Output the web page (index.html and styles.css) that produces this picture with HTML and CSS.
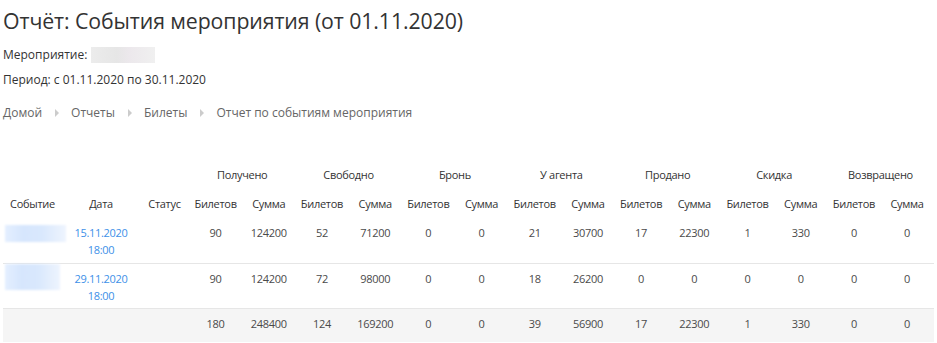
FILE: index.html
```html
<!DOCTYPE html>
<html lang="ru">
<head>
<meta charset="utf-8">
<title>Отчёт: События мероприятия</title>
<link rel="stylesheet" href="styles.css">
</head>
<body>
<div class="page">
  <h1 class="title">Отчёт: События мероприятия (от 01.11.2020)</h1>
  <p class="meta">Мероприятие: <span class="blur-grey"></span></p>
  <p class="meta meta2">Период: с 01.11.2020 по 30.11.2020</p>
  <nav class="crumbs">
    <span>Домой</span><span class="sep"></span>
    <span>Отчеты</span><span class="sep"></span>
    <span>Билеты</span><span class="sep"></span>
    <span>Отчет по событиям мероприятия</span>
  </nav>
  <table class="report">
    <colgroup>
      <col class="c-event"><col class="c-date"><col class="c-status">
      <col class="c-num"><col class="c-num"><col class="c-num"><col class="c-num">
      <col class="c-num"><col class="c-num"><col class="c-num"><col class="c-num">
      <col class="c-num"><col class="c-num"><col class="c-num"><col class="c-num">
      <col class="c-num"><col class="c-num">
    </colgroup>
    <thead>
      <tr class="h1">
        <th></th><th></th><th></th>
        <th colspan="2">Получено</th>
        <th colspan="2">Свободно</th>
        <th colspan="2">Бронь</th>
        <th colspan="2">У агента</th>
        <th colspan="2">Продано</th>
        <th colspan="2">Скидка</th>
        <th colspan="2">Возвращено</th>
      </tr>
      <tr class="h2">
        <th>Событие</th><th>Дата</th><th>Статус</th>
        <th>Билетов</th><th>Сумма</th>
        <th>Билетов</th><th>Сумма</th>
        <th>Билетов</th><th>Сумма</th>
        <th>Билетов</th><th>Сумма</th>
        <th>Билетов</th><th>Сумма</th>
        <th>Билетов</th><th>Сумма</th>
        <th>Билетов</th><th>Сумма</th>
      </tr>
    </thead>
    <tbody>
      <tr>
        <td><span class="blur-blue w1"></span></td>
        <td><a class="date">15.11.2020<br>18:00</a></td>
        <td></td>
        <td>90</td><td>124200</td><td>52</td><td>71200</td><td>0</td><td>0</td>
        <td>21</td><td>30700</td><td>17</td><td>22300</td><td>1</td><td>330</td><td>0</td><td>0</td>
      </tr>
      <tr>
        <td><span class="blur-blue w2"></span></td>
        <td><a class="date">29.11.2020<br>18:00</a></td>
        <td></td>
        <td>90</td><td>124200</td><td>72</td><td>98000</td><td>0</td><td>0</td>
        <td>18</td><td>26200</td><td>0</td><td>0</td><td>0</td><td>0</td><td>0</td><td>0</td>
      </tr>
    </tbody>
    <tfoot>
      <tr>
        <td></td><td></td><td></td>
        <td>180</td><td>248400</td><td>124</td><td>169200</td><td>0</td><td>0</td>
        <td>39</td><td>56900</td><td>17</td><td>22300</td><td>1</td><td>330</td><td>0</td><td>0</td>
      </tr>
    </tfoot>
  </table>
</div>
</body>
</html>
```

FILE: styles.css
```css
* { box-sizing: border-box; }
body {
  margin: 0;
  background: #fff;
  font-family: "Open Sans", "Noto Sans", Arial, sans-serif;
  color: #444;
  font-size: 12px;
}
.page {
  padding: 0 5px 0 3px;
}
.title {
  margin: 0;
  padding-top: 7px;
  font-size: 21.3px;
  font-weight: 400;
  line-height: 28px;
  color: #333;
  letter-spacing: -0.1px;
}
.meta {
  margin: 11px 0 0;
  line-height: 18px;
  color: #333;
  display: flex;
  align-items: center;
}
.meta2 { margin-top: 7px; }
.blur-grey {
  display: inline-block;
  width: 64px;
  height: 16px;
  margin-left: 4px;
  background: linear-gradient(90deg, #ececec 0%, #e6e6e6 40%, #ece8ec 60%, #f0f0f0 100%);
  filter: blur(0.6px);
}
.crumbs {
  margin-top: 15px;
  display: flex;
  align-items: center;
  line-height: 18px;
  color: #666;
  font-size: 12px;
}
.sep {
  width: 0;
  height: 0;
  border-left: 4px solid #ccc;
  border-top: 4px solid transparent;
  border-bottom: 4px solid transparent;
  margin: 0 12px 0 13px;
}
.report {
  margin-top: 38px;
  border-collapse: collapse;
  table-layout: fixed;
  width: 930px;
  text-align: center;
  color: #4a4a4a;
  font-size: 11px;
  letter-spacing: -0.3px;
}
.c-event { width: 59px; }
.c-date { width: 78px; }
.c-status { width: 49px; }
.c-num { width: 53.2px; }
.report th {
  font-weight: 400;
  padding: 0;
  color: #333;
}
.h1 th { height: 28px; vertical-align: middle; }
.h2 th { height: 30px; vertical-align: middle; }
.report tbody td {
  height: 45px;
  padding: 6px 0 0;
  vertical-align: top;
  line-height: 17px;
  border-bottom: 1px solid #e6e6e6;
}
.report tfoot td {
  height: 34px;
  background: #f5f5f5;
  padding: 0 0 3px;
  vertical-align: middle;
}
.date {
  color: #3d90e8;
  text-decoration: none;
}
.blur-blue {
  display: block;
  margin-left: 2px;
  background: linear-gradient(90deg, #e4efff 0%, #d6e6fd 30%, #d9e8fd 60%, #eef4fe 100%);
  filter: blur(0.8px);
}
.w1 { width: 61px; height: 17px; margin-top: 1px; }
.w2 { width: 55px; height: 26px; margin-top: -6px; }
```
